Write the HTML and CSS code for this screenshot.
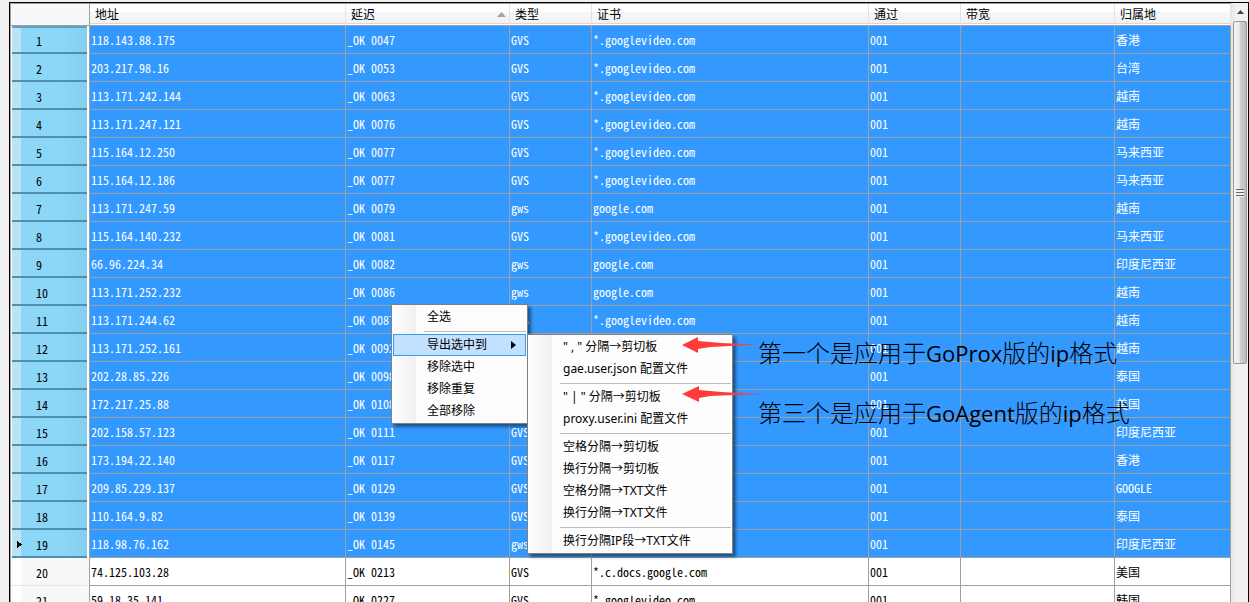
FILE: index.html
```
<!DOCTYPE html>
<html lang="zh-CN">
<head>
<meta charset="utf-8">
<title>IP</title>
<link rel="stylesheet" href="styles.css">
</head>
<body>
<main class="frame">
  <div class="grid-view">
    <table class="grid">
      <colgroup>
        <col class="col-index"><col class="col-address"><col class="col-delay"><col class="col-type">
        <col class="col-cert"><col class="col-pass"><col class="col-band"><col class="col-place">
      </colgroup>
      <thead>
        <tr>
          <th class="corner"></th>
          <th scope="col">地址</th>
          <th scope="col" aria-sort="ascending"><span class="sorted">延迟<svg class="sort-mark" width="9" height="5" viewBox="0 0 9 5"><path d="M4.5 0 9 5H0Z" fill="#a0a0a0"/></svg></span></th>
          <th scope="col">类型</th>
          <th scope="col">证书</th>
          <th scope="col">通过</th>
          <th scope="col">带宽</th>
          <th scope="col">归属地</th>
        </tr>
      </thead>
      <tbody>
        <tr class="selected"><th scope="row"><span>1</span></th><td>118.143.88.175</td><td>_OK 0047</td><td>GVS</td><td>*.googlevideo.com</td><td>001</td><td></td><td>香港</td></tr>
        <tr class="selected"><th scope="row"><span>2</span></th><td>203.217.98.16</td><td>_OK 0053</td><td>GVS</td><td>*.googlevideo.com</td><td>001</td><td></td><td>台湾</td></tr>
        <tr class="selected"><th scope="row"><span>3</span></th><td>113.171.242.144</td><td>_OK 0063</td><td>GVS</td><td>*.googlevideo.com</td><td>001</td><td></td><td>越南</td></tr>
        <tr class="selected"><th scope="row"><span>4</span></th><td>113.171.247.121</td><td>_OK 0076</td><td>GVS</td><td>*.googlevideo.com</td><td>001</td><td></td><td>越南</td></tr>
        <tr class="selected"><th scope="row"><span>5</span></th><td>115.164.12.250</td><td>_OK 0077</td><td>GVS</td><td>*.googlevideo.com</td><td>001</td><td></td><td>马来西亚</td></tr>
        <tr class="selected"><th scope="row"><span>6</span></th><td>115.164.12.186</td><td>_OK 0077</td><td>GVS</td><td>*.googlevideo.com</td><td>001</td><td></td><td>马来西亚</td></tr>
        <tr class="selected"><th scope="row"><span>7</span></th><td>113.171.247.59</td><td>_OK 0079</td><td>gws</td><td>google.com</td><td>001</td><td></td><td>越南</td></tr>
        <tr class="selected"><th scope="row"><span>8</span></th><td>115.164.140.232</td><td>_OK 0081</td><td>GVS</td><td>*.googlevideo.com</td><td>001</td><td></td><td>马来西亚</td></tr>
        <tr class="selected"><th scope="row"><span>9</span></th><td>66.96.224.34</td><td>_OK 0082</td><td>gws</td><td>google.com</td><td>001</td><td></td><td>印度尼西亚</td></tr>
        <tr class="selected"><th scope="row"><span>10</span></th><td>113.171.252.232</td><td>_OK 0086</td><td>gws</td><td>google.com</td><td>001</td><td></td><td>越南</td></tr>
        <tr class="selected"><th scope="row"><span>11</span></th><td>113.171.244.62</td><td>_OK 0087</td><td>GVS</td><td>*.googlevideo.com</td><td>001</td><td></td><td>越南</td></tr>
        <tr class="selected"><th scope="row"><span>12</span></th><td>113.171.252.161</td><td>_OK 0092</td><td>GVS</td><td>*.googlevideo.com</td><td>001</td><td></td><td>越南</td></tr>
        <tr class="selected"><th scope="row"><span>13</span></th><td>202.28.85.226</td><td>_OK 0098</td><td>GVS</td><td>*.googlevideo.com</td><td>001</td><td></td><td>泰国</td></tr>
        <tr class="selected"><th scope="row"><span>14</span></th><td>172.217.25.88</td><td>_OK 0108</td><td>GVS</td><td>*.googlevideo.com</td><td>001</td><td></td><td>美国</td></tr>
        <tr class="selected"><th scope="row"><span>15</span></th><td>202.158.57.123</td><td>_OK 0111</td><td>GVS</td><td>*.googlevideo.com</td><td>001</td><td></td><td>印度尼西亚</td></tr>
        <tr class="selected"><th scope="row"><span>16</span></th><td>173.194.22.140</td><td>_OK 0117</td><td>GVS</td><td>*.googlevideo.com</td><td>001</td><td></td><td>香港</td></tr>
        <tr class="selected"><th scope="row"><span>17</span></th><td>209.85.229.137</td><td>_OK 0129</td><td>GVS</td><td>*.googlevideo.com</td><td>001</td><td></td><td>GOOGLE</td></tr>
        <tr class="selected"><th scope="row"><span>18</span></th><td>110.164.9.82</td><td>_OK 0139</td><td>GVS</td><td>*.googlevideo.com</td><td>001</td><td></td><td>泰国</td></tr>
        <tr class="selected current"><th scope="row"><span>19</span></th><td>118.98.76.162</td><td>_OK 0145</td><td>gws</td><td>google.com</td><td>001</td><td></td><td>印度尼西亚</td></tr>
        <tr><th scope="row"><span>20</span></th><td>74.125.103.28</td><td>_OK 0213</td><td>GVS</td><td>*.c.docs.google.com</td><td>001</td><td></td><td>美国</td></tr>
        <tr><th scope="row"><span>21</span></th><td>59.18.35.141</td><td>_OK 0227</td><td>GVS</td><td>*.googlevideo.com</td><td>001</td><td></td><td>韩国</td></tr>
      </tbody>
    </table>
  </div>
  <div class="scrollbar">
    <button class="scroll-up" type="button" aria-label="向上滚动"><svg width="7" height="4" viewBox="0 0 7 4"><path d="M3.5 0 7 4H0Z" fill="#444"/></svg></button>
    <div class="scroll-thumb"><span class="grip"></span></div>
  </div>
</main>

<div class="menu main-menu" role="menu">
  <button type="button" role="menuitem">全选</button>
  <hr>
  <button type="button" role="menuitem" class="active" aria-haspopup="true">导出选中到<svg width="5" height="8" viewBox="0 0 5 8"><path d="M0 0 5 4 0 8Z"/></svg></button>
  <button type="button" role="menuitem">移除选中</button>
  <button type="button" role="menuitem">移除重复</button>
  <button type="button" role="menuitem">全部移除</button>
</div>

<div class="menu sub-menu" role="menu">
  <button type="button" role="menuitem">" , " 分隔→剪切板</button>
  <button type="button" role="menuitem">gae.user.json 配置文件</button>
  <hr>
  <button type="button" role="menuitem">" | " 分隔→剪切板</button>
  <button type="button" role="menuitem">proxy.user.ini 配置文件</button>
  <hr>
  <button type="button" role="menuitem">空格分隔→剪切板</button>
  <button type="button" role="menuitem">换行分隔→剪切板</button>
  <button type="button" role="menuitem">空格分隔→TXT文件</button>
  <button type="button" role="menuitem">换行分隔→TXT文件</button>
  <hr>
  <button type="button" role="menuitem">换行分隔IP段→TXT文件</button>
</div>

<svg class="pointer pointer-first" width="76" height="18" viewBox="0 0 76 18"><path d="M0 9 16 1V5L28 6Q50 8 76 8Q50 10 28 11L16 13V17Z"/></svg>
<svg class="pointer pointer-third" width="82" height="18" viewBox="0 0 82 18"><path d="M0 9 17 1V5L28 6Q50 8 82 9Q50 10 28 11L17 13V17Z"/></svg>
<p class="note note-first">第一个是应用于<span class="latin">GoProx</span>版的<span class="latin">ip</span>格式</p>
<p class="note note-third">第三个是应用于<span class="latin">GoAgent</span>版的<span class="latin">ip</span>格式</p>
</body>
</html>
```
FILE: styles.css
```
* { box-sizing: border-box; }

body {
  margin: 0;
  padding: 2px 0 0 9px;
  height: 100vh;
  overflow: hidden;
  background: #f0f0f0;
  color: #000;
  font: 12px/16px "Noto Sans CJK SC", sans-serif;
}

.frame {
  display: flex;
  height: 100%;
  border: 1px solid #000;
  border-bottom: 0;
}

.grid-view {
  flex: 1;
  min-width: 0;
  overflow: hidden;
  border: 1px solid #a0a0a0;
  border-width: 1px 0 0 1px;
  background: #fff;
}

.grid {
  width: 100%;
  table-layout: fixed;
  border-collapse: separate;
  border-spacing: 0;
}

.col-index { width: 79px; }
.col-address { width: 256px; }
.col-delay { width: 164px; }
.col-type { width: 82px; }
.col-pass { width: 92px; }
.col-band { width: 154px; }
.col-place { width: 116px; }

.grid th,
.grid td {
  overflow: hidden;
  white-space: nowrap;
  text-align: left;
  font-weight: normal;
}

thead th {
  height: 22px;
  padding: 0 8px 1px 5px;
  border-bottom: 1px solid #a0a0a0;
  border-right: 1px solid #e2e4e6;
  background: linear-gradient(#fff 0 8px, #f7f8fa 8px, #f1f2f4 19px, #d5d9dd 19px 20px, #fff 20px);
}

thead .corner {
  border-right-color: #a0a0a0;
  background: #f7f8fa;
}

.sorted {
  display: flex;
  align-items: center;
  justify-content: space-between;
}

.sort-mark { margin-right: -5px; }

tbody th,
tbody td {
  height: 28px;
  padding: 0 1px;
  font-feature-settings: "hwid";
}

tbody td {
  border: 1px solid #a0a0a0;
  border-width: 0 1px 1px 0;
}

tbody th {
  padding: 0 2px 0 0;
  border-right: 1px solid #a0a0a0;
  background: linear-gradient(90deg, #fff 10px, #f7f8fa 10px);
}

tbody th span {
  display: block;
  height: 28px;
  padding-left: 25px;
  line-height: 30px;
  border-bottom: 1px solid #e5e5e5;
}

.selected td {
  background: #39f;
  color: #fff;
}

.selected th { background: #fff; }

.selected th span {
  margin-left: 1px;
  padding-left: 24px;
  border-bottom: 2px solid #4f8fb0;
  background: linear-gradient(90deg, #bae3f7 9px, #8cd6f7 9px, #8cd6f7 50px, #84ceef);
}

.selected:first-child th span {
  box-shadow: inset 0 2px #5f9fbf;
}

.current th span {
  background:
    conic-gradient(from 232deg at 100% 50%, #000 76deg, transparent 76deg) 5px 10px / 5px 9px no-repeat,
    linear-gradient(90deg, #bae3f7 9px, #8cd6f7 9px, #8cd6f7 50px, #84ceef);
}

.scrollbar {
  display: flex;
  flex: 0 0 17px;
  flex-direction: column;
  padding: 0 1px 0 2px;
  background: linear-gradient(90deg, #e6e6e6, #f1f1f1 5px);
}

.scroll-up {
  display: flex;
  align-items: center;
  justify-content: center;
  height: 18px;
  padding: 0;
  border: 0;
  background: none;
}

.scroll-thumb {
  display: grid;
  place-items: center;
  height: 57vh;
  border: 1px solid #979797;
  border-radius: 2px;
  background: linear-gradient(90deg, #f5f5f5, #e9e9eb 45%, #d2d2d4 50%, #bcbcbe);
}

.grip {
  width: 8px;
  height: 8px;
  background: repeating-linear-gradient(#666 0 1px, #eee 1px 3px);
}

.menu {
  position: absolute;
  padding: 1px;
  border: 1px solid #808080;
  background: linear-gradient(90deg, #fdfdfd 1px, #f0f0f0 24px, #fdfdfd 24px);
  box-shadow: 3px 3px 3px rgba(0, 0, 0, .45);
  font-family: "Noto Sans", "Noto Sans CJK SC", sans-serif;
}

.main-menu {
  top: 304px;
  left: 391px;
  width: 137px;
}

.sub-menu {
  top: 334px;
  left: 527px;
  width: 206px;
}

.menu button {
  display: flex;
  align-items: center;
  justify-content: space-between;
  width: 100%;
  height: 22px;
  padding: 0 9px 0 33px;
  border: 1px solid transparent;
  background: none;
  color: #000;
  font: inherit;
  white-space: nowrap;
}

.menu .active {
  border-color: #39f;
  background: #c2e0ff;
}

.menu hr {
  height: 6px;
  margin: 0 0 0 31px;
  border: 0;
  background: linear-gradient(transparent 3px, #bdbdbd 3px 4px, transparent 4px);
}

.pointer {
  position: absolute;
  left: 682px;
  fill: #ff3b3b;
}

.pointer-first { top: 336px; }
.pointer-third { top: 385px; }

.note {
  position: absolute;
  left: 758px;
  margin: 0;
  font: 300 24px/32px "Noto Sans CJK SC", sans-serif;
  white-space: nowrap;
}

.latin {
  font: 400 22px/32px "Open Sans", sans-serif;
}

.note-first { top: 336px; }
.note-third { top: 396px; }
```
